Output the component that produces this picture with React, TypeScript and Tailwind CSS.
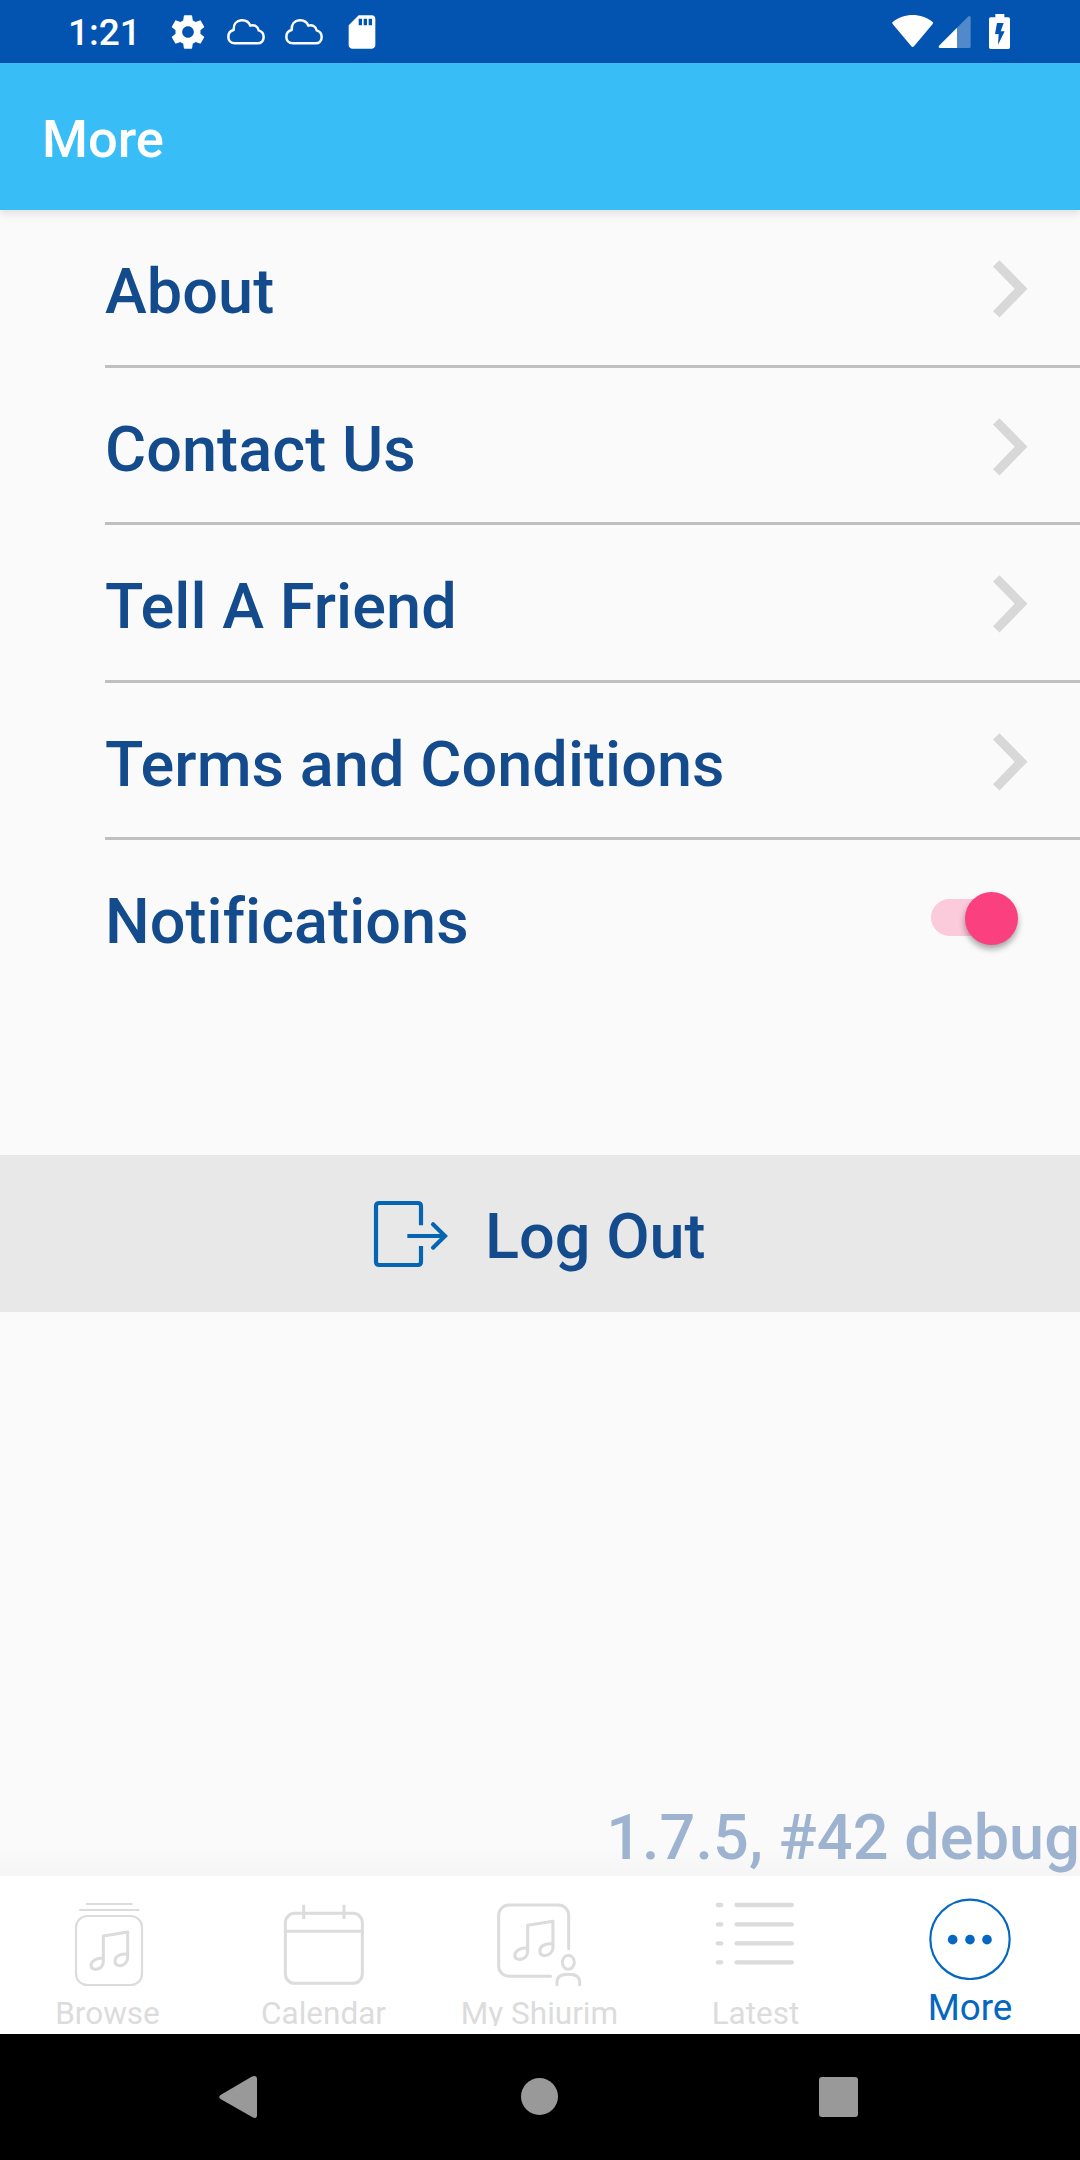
import type { ReactNode } from "react";

const NOTE =
  "M109 169C92 167 75 177 75 190C75 199 82 202 90 202C102 202 112 192 112 180V102L185 90V168C185 180 174 191 161 191C152 191 147 186 147 177C147 165 160 155 179 156";

function Cloud({ className }: { className: string }) {
  return (
    <svg viewBox="0 0 120 84" className={`h-7 w-10 ${className}`} fill="none" stroke="#fff" strokeWidth="7.5" strokeLinejoin="round">
      <path d="M27 76C14 76 7 67 7 57C7 46 14 38 23 36C22 18 32 8 46 7C60 6 69 13 73 23C84 19 96 25 98 37C108 40 113 48 113 57C113 68 106 76 95 76Z" />
    </svg>
  );
}

function StatusBar() {
  return (
    <header className="flex h-[63px] items-start bg-[#0353b1] text-white">
      <span className="ml-[68px] w-[100px] pt-[2px] text-[37px] font-medium leading-[62px]">1:21</span>
      <svg viewBox="0 0 24 24" className="mt-3 size-10" fill="#fff">
        <path d="M19.43 12.98c.04-.32.07-.64.07-.98s-.03-.66-.07-.98l2.11-1.65c.19-.15.24-.42.12-.64l-2-3.46c-.12-.22-.39-.3-.61-.22l-2.49 1c-.52-.4-1.08-.73-1.69-.98l-.38-2.65C14.46 2.18 14.25 2 14 2h-4c-.25 0-.46.18-.49.42l-.38 2.65c-.61.25-1.17.59-1.69.98l-2.49-1c-.23-.09-.49 0-.61.22l-2 3.46c-.13.22-.07.49.12.64l2.11 1.65c-.04.32-.07.65-.07.98s.03.66.07.98l-2.11 1.65c-.19.15-.24.42-.12.64l2 3.46c.12.22.39.3.61.22l2.49-1c.52.4 1.08.73 1.69.98l.38 2.65c.03.24.24.42.49.42h4c.25 0 .46-.18.49-.42l.38-2.65c.61-.25 1.17-.59 1.69-.98l2.49 1c.23.09.49 0 .61-.22l2-3.46c.12-.22.07-.49-.12-.64l-2.11-1.65zM12 15.5c-1.93 0-3.5-1.57-3.5-3.5s1.57-3.5 3.5-3.5 3.5 1.57 3.5 3.5-1.57 3.5-3.5 3.5z" />
      </svg>
      <Cloud className="ml-[18px] mt-[18px]" />
      <Cloud className="ml-[18px] mt-[18px]" />
      <svg viewBox="0 0 24 24" className="ml-[18px] mt-3 size-10" fill="#fff">
        <path d="M18 2h-8L4.02 8 4 20c0 1.1.9 2 2 2h12c1.1 0 2-.9 2-2V4c0-1.1-.9-2-2-2zm-6 6h-2V4h2v4zm3 0h-2V4h2v4zm3 0h-2V4h2v4z" />
      </svg>
      <div className="ml-auto mr-[69px] mt-3.5 flex items-start">
        <svg viewBox="0 0 126 105" className="h-[35px] w-[42px]" fill="#fff">
          <path d="M1 25C38-4 86-4 123 25Q124 27 122 30L66 97Q62 101 58 97L2 30Q0 27 1 25Z" />
        </svg>
        <svg viewBox="0 0 99 105" className="ml-[4px] h-[35px] w-[33px]">
          <path d="M95 6Q98 8 98 11V98Q98 102 94 102H57V41L90 8Q93 5 95 6Z" fill="#5189cb" />
          <path d="M57 41V102H5Q0 101 3 95Z" fill="#fff" />
        </svg>
        <svg viewBox="0 0 66 105" className="ml-[18px] h-[35px] w-[22px]" fill="#fff" fillRule="evenodd">
          <path d="M19 0H46V10H58Q63 10 63 15V100Q63 105 58 105H5Q0 105 0 100V15Q0 10 5 10H19ZM24 27L18 60H29L27 92L47 52H35L44 27Z" />
        </svg>
      </div>
    </header>
  );
}

function Row({ label, last, children }: { label: string; last?: boolean; children: ReactNode }) {
  return (
    <li className="ml-[105px] flex h-[157.5px] flex-col">
      <div className="flex flex-1 items-center">
        <span
          className={`flex-1 text-[63px] font-medium leading-[74px] tracking-[0.06px] text-[#134b8c] ${last ? "pt-[7px]" : "pt-[10px]"}`}
        >
          {label}
        </span>
        {children}
      </div>
      {!last && <div className="h-[3px] bg-[#bfbfbf]" />}
    </li>
  );
}

function Chevron() {
  return (
    <svg viewBox="0 0 35 58" className="mr-[52px] mt-[4px] h-[58px] w-[35px]" fill="#d8d8d8">
      <path d="M6.5 0.2L34.5 28.8L6.5 57.4L0 51.2L21.7 28.8L0 6.4Z" />
    </svg>
  );
}

function Tab({ label, children }: { label: string; children: ReactNode }) {
  return (
    <div className="flex w-[216px] flex-col items-center pt-[26px]">
      <svg viewBox="0 0 252 252" className="size-[84px] overflow-visible" fill="none" stroke="#dcdcdc" strokeWidth="9" strokeLinecap="round" strokeLinejoin="round">
        {children}
      </svg>
      <span className="mt-[9px] h-[31px] overflow-hidden whitespace-nowrap pr-px text-[31.5px] leading-[37px] text-[#dcdcdc]">{label}</span>
    </div>
  );
}

export default function App() {
  return (
    <div className="flex h-[2160px] w-[1080px] flex-col overflow-hidden bg-[#fafafa] font-['Roboto',sans-serif]">
      <StatusBar />
      <div className="z-10 h-[147px] bg-[#39bdf6] pl-[42px] pt-[2px] text-[52.5px] font-medium leading-[149px] text-white shadow-[0_3px_9px_rgba(0,0,0,0.12)]">
        More
      </div>

      <ul className="h-[945px]">
        <Row label="About"><Chevron /></Row>
        <Row label="Contact Us"><Chevron /></Row>
        <Row label="Tell A Friend"><Chevron /></Row>
        <Row label="Terms and Conditions"><Chevron /></Row>
        <Row label="Notifications" last>
          <div className="mb-[2px] mr-[62px] flex h-[37px] w-[87px] items-center justify-end rounded-full bg-[#fbcadb]">
            <div className="mt-[2px] size-[53px] rounded-full bg-[#fb4080] shadow-[0_4px_6px_rgba(0,0,0,0.35)]" />
          </div>
        </Row>
      </ul>

      <button className="flex h-[157px] items-start bg-[#e8e8e8] text-left">
        <svg viewBox="0 0 225 204" className="ml-[373px] mt-[45px] h-[68px] w-[75px]" fill="none" stroke="#0565b3" strokeWidth="12.5">
          <path d="M144 76V19Q144 9 134 9H19Q9 9 9 19V185Q9 195 19 195H134Q144 195 144 185V138" />
          <path d="M103 108H216" />
          <path d="M180 73L216 108L180 143" strokeLinecap="round" />
        </svg>
        <span className="ml-[37px] pt-[45px] text-[63px] font-medium leading-[74px] text-[#134b8c]">Log Out</span>
      </button>

      <div className="flex flex-1 items-end justify-end bg-[linear-gradient(to_top,#f5f5f5,#fafafa_28px)] pb-[1px] text-[63px] font-medium leading-[74px] tracking-[0.06px] text-[#9eb3cf]">
        1.7.5, #42 debug
      </div>

      <nav className="flex h-[158px] bg-white">
        <Tab label="Browse">
          <g strokeWidth="6.5">
            <path d="M62 6H197M42 24H218" />
            <rect x="30" y="42" width="198" height="207" rx="34" />
          </g>
          <path d={NOTE} />
        </Tab>
        <Tab label="Calendar">
          <rect x="10" y="34" width="231" height="210" rx="28" />
          <path d="M10 88H241" />
          <path d="M65 8V51M186 8V51" strokeLinecap="butt" />
        </Tab>
        <Tab label="My Shiurim">
          <path d="M212 140V40A31 31 0 0 0 181 9H33A31 31 0 0 0 2 40V192A31 31 0 0 0 33 223H158" />
          <path d={NOTE} transform="translate(-27.5 -34) scale(1.04 1.02)" />
          <ellipse cx="211" cy="181" rx="18" ry="21" />
          <path d="M177 248V240C177 223 190 217 211 217S245 223 245 240V248" />
        </Tab>
        <Tab label="Latest">
          <path strokeWidth="13" d="M11.500 9H21.500M67.500 9H233.500M11.500 67H21.500M67.500 67H233.500M11.500 124H21.500M67.500 124H233.500M11.500 181H21.500M67.500 181H233.500" />
        </Tab>
        <div className="flex w-[212px] flex-col items-center pt-[22px]">
          <svg viewBox="0 0 246 246" className="size-[82px]" fill="#0568c0">
            <circle cx="123" cy="124" r="119" fill="none" stroke="#0568c0" strokeWidth="6.5" />
            <circle cx="71" cy="125" r="14.500" />
            <circle cx="123" cy="125" r="14.500" />
            <circle cx="174" cy="125" r="14.500" />
          </svg>
          <span className="mt-[6px] text-[36.75px] leading-[43px] text-[#0568c0]">More</span>
        </div>
      </nav>

      <div className="flex h-[126px] items-center bg-black pb-px">
        <svg viewBox="0 0 38 44" className="ml-[219px] h-[44px] w-[38px]" fill="#999">
          <path d="M33 1.500Q38 0 38 4V40Q38 44 34 42.500L1.500 24Q-1 22 1.500 20Z" />
        </svg>
        <div className="ml-[264px] size-[37px] rounded-full bg-[#999]" />
        <div className="ml-[261px] h-[40px] w-[39px] rounded-[3px] bg-[#999]" />
      </div>
    </div>
  );
}
